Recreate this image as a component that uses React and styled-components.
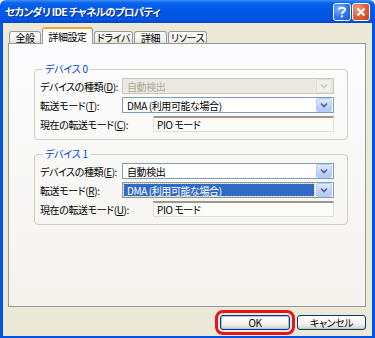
import React from 'react'
import styled, { createGlobalStyle } from 'styled-components'

const GlobalStyle = createGlobalStyle`
  html, body {
    margin: 0;
    padding: 0;
    background: #ece9d8;
  }
  body {
    font-family: "Noto Sans CJK JP", "Liberation Sans", sans-serif;
    font-size: 10px;
    letter-spacing: -0.4px;
    font-feature-settings: "palt";
  }
`

const Window = styled.div`
  width: 375px;
  height: 338px;
  display: flex;
  flex-direction: column;
  overflow: hidden;
`

const TitleBar = styled.div`
  height: 23px;
  flex-shrink: 0;
  display: flex;
  align-items: center;
  padding: 0 5px 0 5px;
  background: linear-gradient(#3d8ff8 0, #0a63ea 3px, #0059e8 45%, #0054e0 85%, #0046cc 100%);
  border-radius: 6px 6px 0 0;
`

const Title = styled.div`
  flex: 1;
  color: #fff;
  font-weight: bold;
  font-size: 10.5px;
  letter-spacing: -0.7px;
  text-shadow: 1px 1px 0 #0b2a8a;
  white-space: nowrap;
`

const CaptionButton = styled.div`
  width: 16px;
  height: 16px;
  margin-left: 1px;
  border: 1px solid #fff;
  border-radius: 3px;
  display: flex;
  align-items: center;
  justify-content: center;
  background: ${p => p.$close
    ? 'radial-gradient(circle at 30% 30%, #f0a080, #e0603a 50%, #c23a15)'
    : 'radial-gradient(circle at 30% 30%, #7fb2ff, #2e73f0 55%, #1c55d0)'};
`

const Body = styled.div`
  flex: 1;
  display: flex;
  flex-direction: column;
  background: #ece9d8;
  border: 3px solid #0055e5;
  border-top: none;
  padding: 4px 6px 6px 5px;
`

const TabRow = styled.div`
  display: flex;
  align-items: flex-end;
  height: 16px;
  padding-left: 1px;
`

const Tab = styled.div`
  position: relative;
  min-width: ${p => p.$w}px;
  padding: 0 2px;
  height: ${p => (p.$active ? '17px' : '12px')};
  margin: 0 1px ${p => (p.$active ? '-1px' : '0')} 0;
  box-sizing: border-box;
  display: flex;
  align-items: center;
  justify-content: center;
  white-space: nowrap;
  line-height: 10px;
  border: 1px solid #919b9c;
  border-bottom: none;
  border-top: ${p => (p.$active ? '2px solid #f2a33a' : '1px solid #919b9c')};
  border-radius: 3px 3px 0 0;
  background: ${p => (p.$active ? '#fcfcfe' : 'linear-gradient(#fefefe, #f2f1ec 70%, #e6e4da)')};
  z-index: ${p => (p.$active ? 2 : 0)};
`

const Panel = styled.div`
  height: 264px;
  box-sizing: border-box;
  border: 1px solid #919b9c;
  background: linear-gradient(#fcfcfe, #f4f3ee);
  padding: 19px 17px 0 25px;
`

const Group = styled.fieldset`
  margin: ${p => (p.$second ? '8px' : '0')} 0 0 0;
  padding: 3px 13px 7px 5px;
  border: 1px solid #d0d0bf;
  border-radius: 4px;
  display: flex;
  flex-direction: column;
  gap: 3px;
`

const Legend = styled.legend`
  color: #0046d5;
  padding: 0 2px;
  margin-left: 3px;
  line-height: 12px;
  letter-spacing: -0.2px;
`

const Row = styled.div`
  display: flex;
  align-items: center;
  height: 16px;
`

const Label = styled.div`
  width: 82px;
  flex-shrink: 0;
  white-space: nowrap;
`

const Combo = styled.div`
  flex: 1;
  height: 16px;
  box-sizing: border-box;
  display: flex;
  align-items: center;
  padding: 1px;
  border: 1px solid ${p => (p.$disabled ? '#c9c7ba' : '#7f9db9')};
  background: ${p => (p.$disabled ? '#ebeae2' : '#fff')};
  color: ${p => (p.$disabled ? '#aca899' : '#000')};
`

const ComboText = styled.div`
  flex: 1;
  height: 12px;
  display: flex;
  align-items: center;
  padding-left: 3px;
  margin-right: 2px;
  white-space: nowrap;
  background: ${p => (p.$selected ? '#316ac5' : 'transparent')};
  color: ${p => (p.$selected ? '#fff' : 'inherit')};
  outline: ${p => (p.$selected ? '1px dotted #e8c070' : 'none')};
`

const DropButton = styled.div`
  width: 14px;
  height: 12px;
  border-radius: 2px;
  display: flex;
  align-items: center;
  justify-content: center;
  background: ${p => (p.$disabled
    ? '#f0efe8'
    : 'linear-gradient(#dde8fe, #c1d3fb 60%, #b2c8f8)')};
  border: 1px solid ${p => (p.$disabled ? '#e2e0d6' : '#b9cbf3')};
`

const Field = styled.div`
  flex: 1;
  margin-left: ${p => p.$indent || 0}px;
  height: 16px;
  box-sizing: border-box;
  display: flex;
  align-items: center;
  padding-left: 3px;
  border: 1px solid #e2dfd2;
  border-top: 2px solid #9c998c;
  background: #fbfbf8;
  white-space: nowrap;
`

const ButtonRow = styled.div`
  display: flex;
  justify-content: flex-end;
  gap: 7px;
  padding-top: 8px;
`

const Button = styled.button`
  width: ${p => p.$w}px;
  height: 15px;
  padding: 0;
  font: inherit;
  font-size: 10px;
  line-height: 10px;
  letter-spacing: -0.4px;
  color: #000;
  border: 1px solid #003c74;
  border-radius: 3px;
  background: linear-gradient(#ffffff, #f3f3ef 60%, #d6d0c5);
  box-shadow: ${p => (p.$default ? 'inset 0 0 0 1px #a9c4f5' : 'inset 0 -1px 0 #d0cbbf')};
  outline: ${p => (p.$marked ? '3px solid #e8141b' : 'none')};
  outline-offset: 2px;
`

const Chevron = ({ disabled }) => (
  <svg width="8" height="6" viewBox="0 0 8 6">
    <path d="M1 1.5 L4 4.5 L7 1.5" fill="none" stroke={disabled ? '#c9c7ba' : '#4d6185'} strokeWidth="1.6" />
  </svg>
)

const ComboBox = ({ text, disabled, selected }) => (
  <Combo $disabled={disabled}>
    <ComboText $selected={selected}>{text}</ComboText>
    <DropButton $disabled={disabled}>
      <Chevron disabled={disabled} />
    </DropButton>
  </Combo>
)

const Key = ({ children }) => (
  <>(<u>{children}</u>):</>
)

const tabs = [
  { name: '全般', w: 32 },
  { name: '詳細設定', w: 51 },
  { name: 'ドライバ', w: 36 },
  { name: '詳細', w: 33 },
  { name: 'リソース', w: 35 },
]

const devices = [
  { name: 'デバイス 0', keys: ['D', 'T', 'C'], disabled: true, type: '自動検出' },
  { name: 'デバイス 1', keys: ['E', 'R', 'U'], disabled: false, type: '自動検出', selected: true },
]

export default function App() {
  return (
    <Window>
      <GlobalStyle />
      <TitleBar>
        <Title>セカンダリ IDE チャネルのプロパティ</Title>
        <CaptionButton>
          <svg width="10" height="12" viewBox="0 0 10 12">
            <path d="M2 3.5 C2 1, 8 1, 8 3.5 C8 5.5, 5 5.5, 5 8" fill="none" stroke="#fff" strokeWidth="2" />
            <rect x="4" y="9.3" width="2" height="2" fill="#fff" />
          </svg>
        </CaptionButton>
        <CaptionButton $close>
          <svg width="10" height="10" viewBox="0 0 10 10">
            <path d="M1.5 1.5 L8.5 8.5 M8.5 1.5 L1.5 8.5" stroke="#fff" strokeWidth="2" />
          </svg>
        </CaptionButton>
      </TitleBar>
      <Body>
        <TabRow>
          {tabs.map((t, i) => (
            <Tab key={t.name} $w={t.w} $active={i === 1}>{t.name}</Tab>
          ))}
        </TabRow>
        <Panel>
          {devices.map((d, i) => (
            <Group key={d.name} $second={i === 1}>
              <Legend>{d.name}</Legend>
              <Row>
                <Label>デバイスの種類<Key>{d.keys[0]}</Key></Label>
                <ComboBox text={d.type} disabled={d.disabled} />
              </Row>
              <Row>
                <Label>転送モード<Key>{d.keys[1]}</Key></Label>
                <ComboBox text="DMA (利用可能な場合)" selected={d.selected} />
              </Row>
              <Row>
                <Label>現在の転送モード<Key>{d.keys[2]}</Key></Label>
                <Field $indent={31}>PIO モード</Field>
              </Row>
            </Group>
          ))}
        </Panel>
        <ButtonRow>
          <Button $w={70} $default $marked>OK</Button>
          <Button $w={69}>キャンセル</Button>
        </ButtonRow>
      </Body>
    </Window>
  )
}
